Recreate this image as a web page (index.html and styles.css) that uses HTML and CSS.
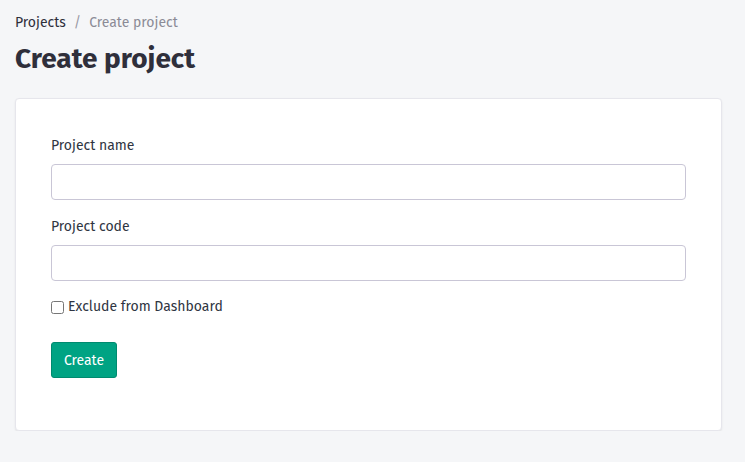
FILE: index.html
```html
<!DOCTYPE html>
<html>
<head>
<meta charset="utf-8">
<link rel="stylesheet" href="styles.css">
</head>
<body>
<div class="page">
  <nav class="breadcrumb">
    <a class="crumb" href="#">Projects</a>
    <span class="sep">/</span>
    <span class="crumb current">Create project</span>
  </nav>
  <h1 class="title">Create project</h1>
  <div class="card">
    <form class="form">
      <label class="label" for="name">Project name</label>
      <input class="input" id="name" type="text">
      <label class="label second" for="code">Project code</label>
      <input class="input" id="code" type="text">
      <label class="check">
        <input type="checkbox" class="checkbox">
        <span>Exclude from Dashboard</span>
      </label>
      <div class="actions">
        <button type="button" class="btn">Create</button>
      </div>
    </form>
  </div>
</div>
</body>
</html>
```

FILE: styles.css
```css
html, body {
  margin: 0;
  padding: 0;
  background: #f5f6f8;
}
body {
  font-family: "Fira Sans", Lato, "Open Sans", sans-serif;
  color: #2f2f3b;
}
.page {
  padding: 13px 23px 0 15px;
}
.breadcrumb {
  display: flex;
  align-items: center;
  gap: 8px;
  font-size: 14px;
  line-height: 20px;
  height: 20px;
}
.crumb {
  color: #2f2f3b;
  text-decoration: none;
}
.sep {
  color: #9a9aa6;
}
.current {
  color: #8b8b96;
}
.title {
  margin: 8px 0 0;
  font-size: 28px;
  line-height: 36px;
  font-weight: 700;
  color: #2f2f3b;
}
.card {
  margin-top: 21px;
  background: #fff;
  border: 1px solid #e6e6ec;
  border-radius: 4px;
  box-shadow: 0 1px 2px rgba(0,0,0,0.08);
  padding: 37px 35px 52px;
}
.form {
  display: flex;
  flex-direction: column;
}
.label {
  font-size: 14px;
  line-height: 20px;
  margin-bottom: 8px;
  color: #2f3542;
}
.label.second {
  margin-top: 17px;
}
.input {
  box-sizing: border-box;
  height: 36px;
  border: 1px solid #c9c6d6;
  border-radius: 4px;
  margin: 0;
  padding: 0 10px;
  font: inherit;
  background: #fff;
}
.check {
  display: flex;
  align-items: center;
  gap: 4px;
  margin-top: 16px;
  font-size: 14px;
  line-height: 20px;
  color: #2f3542;
}
.checkbox {
  width: 13px;
  height: 13px;
  margin: 0;
}
.actions {
  margin-top: 25px;
  display: flex;
}
.btn {
  height: 36px;
  width: 66px;
  background: #00a383;
  border: 1px solid #008a6f;
  border-radius: 3px;
  color: #fff;
  font: inherit;
  font-size: 14px;
  padding: 0;
}
```
